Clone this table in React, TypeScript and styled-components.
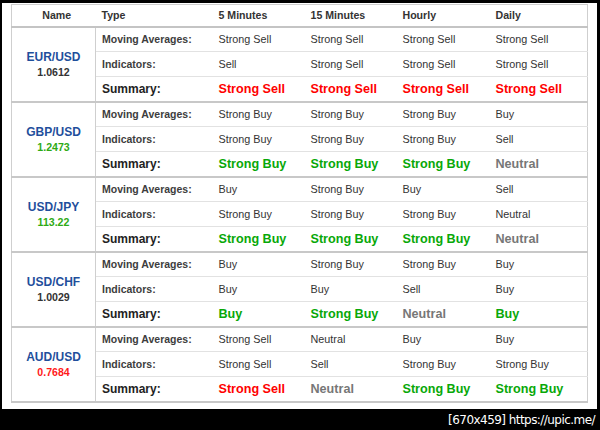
import React from "react";
import styled, { createGlobalStyle } from "styled-components";

const Global = createGlobalStyle`
  html, body { margin: 0; padding: 0; background: #000; }
  body { font-family: "Liberation Sans", Arial, sans-serif; }
`;

type Signal = "Strong Sell" | "Sell" | "Neutral" | "Buy" | "Strong Buy";
type Trend = "up" | "down" | "flat";

interface Pair {
  name: string;
  price: string;
  trend: Trend;
  ma: Signal[];
  ind: Signal[];
  sum: Signal[];
}

const pairs: Pair[] = [
  {
    name: "EUR/USD",
    price: "1.0612",
    trend: "flat",
    ma: ["Strong Sell", "Strong Sell", "Strong Sell", "Strong Sell"],
    ind: ["Sell", "Strong Sell", "Strong Sell", "Strong Sell"],
    sum: ["Strong Sell", "Strong Sell", "Strong Sell", "Strong Sell"],
  },
  {
    name: "GBP/USD",
    price: "1.2473",
    trend: "up",
    ma: ["Strong Buy", "Strong Buy", "Strong Buy", "Buy"],
    ind: ["Strong Buy", "Strong Buy", "Strong Buy", "Sell"],
    sum: ["Strong Buy", "Strong Buy", "Strong Buy", "Neutral"],
  },
  {
    name: "USD/JPY",
    price: "113.22",
    trend: "up",
    ma: ["Buy", "Strong Buy", "Buy", "Sell"],
    ind: ["Strong Buy", "Strong Buy", "Strong Buy", "Neutral"],
    sum: ["Strong Buy", "Strong Buy", "Strong Buy", "Neutral"],
  },
  {
    name: "USD/CHF",
    price: "1.0029",
    trend: "flat",
    ma: ["Buy", "Strong Buy", "Strong Buy", "Buy"],
    ind: ["Buy", "Buy", "Sell", "Buy"],
    sum: ["Buy", "Strong Buy", "Neutral", "Buy"],
  },
  {
    name: "AUD/USD",
    price: "0.7684",
    trend: "down",
    ma: ["Strong Sell", "Neutral", "Buy", "Buy"],
    ind: ["Strong Sell", "Sell", "Strong Buy", "Strong Buy"],
    sum: ["Strong Sell", "Neutral", "Strong Buy", "Strong Buy"],
  },
];

const Page = styled.div`
  width: 600px;
  height: 430px;
  display: flex;
  flex-direction: column;
  background: #000;
  overflow: hidden;
`;

const Panel = styled.div`
  margin: 3px 3px 0 2px;
  height: 406px;
  background: #fff;
  padding: 1px 10px 0 9px;
  box-sizing: border-box;
`;

const Footer = styled.div`
  flex: 1;
  display: flex;
  align-items: center;
  justify-content: flex-end;
  padding-right: 5px;
  color: #fff;
  font-family: "DejaVu Sans", sans-serif;
  font-size: 12px;
  letter-spacing: -0.55px;
`;

const Table = styled.table`
  width: 576px;
  border-collapse: collapse;
  table-layout: fixed;
  border: 1px solid #cfcfcf;
`;

const HeadRow = styled.tr`
  height: 22px;
`;

const HeadCell = styled.th<{ $center?: boolean }>`
  padding: 0 0 0 6px;
  text-align: ${(p) => (p.$center ? "center" : "left")};
  font-size: 10.6px;
  font-weight: bold;
  color: #333;
  border-bottom: 2px solid #c4c4c4;
`;

const NameCell = styled.td`
  text-align: center;
  vertical-align: middle;
  border-right: 1px solid #cfcfcf;
  border-bottom: 2px solid #c8c8c8;
  padding: 0;
`;

const PairName = styled.div`
  font-size: 12px;
  font-weight: bold;
  color: #1f4f9c;
  line-height: 15px;
`;

const priceColor: Record<Trend, string> = {
  up: "#2eaa14",
  down: "#ff1a1a",
  flat: "#333",
};

const Price = styled.div<{ $trend: Trend }>`
  font-size: 10.6px;
  font-weight: bold;
  color: ${(p) => priceColor[p.$trend]};
  line-height: 14px;
`;

const Row = styled.tr<{ $last?: boolean }>`
  height: 25px;
  border-bottom: ${(p) => (p.$last ? "2px solid #c8c8c8" : "1px solid #e2e2e2")};
`;

const Label = styled.td<{ $summary?: boolean }>`
  padding: 0 0 0 6px;
  font-size: ${(p) => (p.$summary ? "12px" : "10.5px")};
  font-weight: bold;
  color: ${(p) => (p.$summary ? "#222" : "#3d3d3d")};
  white-space: nowrap;
`;

const Value = styled.td`
  padding: 0 0 0 6px;
  font-size: 10.8px;
  color: #333;
  white-space: nowrap;
`;

const sumColor: Record<Signal, string> = {
  "Strong Sell": "#ff0000",
  Sell: "#ff0000",
  Neutral: "#777",
  Buy: "#08a808",
  "Strong Buy": "#08a808",
};

const SumValue = styled.td<{ $signal: Signal }>`
  padding: 0 0 0 6px;
  font-size: 12.6px;
  font-weight: bold;
  color: ${(p) => sumColor[p.$signal]};
  white-space: nowrap;
`;

const widths = [84, 117, 92, 92, 93, 98];

export default function App() {
  return (
    <Page>
      <Global />
      <Panel>
        <Table>
          <colgroup>
            {widths.map((w, i) => (
              <col key={i} style={{ width: w }} />
            ))}
          </colgroup>
          <thead>
            <HeadRow>
              <HeadCell $center>Name</HeadCell>
              <HeadCell>Type</HeadCell>
              <HeadCell>5 Minutes</HeadCell>
              <HeadCell>15 Minutes</HeadCell>
              <HeadCell>Hourly</HeadCell>
              <HeadCell>Daily</HeadCell>
            </HeadRow>
          </thead>
          <tbody>
            {pairs.map((p) => (
              <React.Fragment key={p.name}>
                <Row>
                  <NameCell rowSpan={3}>
                    <PairName>{p.name}</PairName>
                    <Price $trend={p.trend}>{p.price}</Price>
                  </NameCell>
                  <Label>Moving Averages:</Label>
                  {p.ma.map((s, i) => (
                    <Value key={i}>{s}</Value>
                  ))}
                </Row>
                <Row>
                  <Label>Indicators:</Label>
                  {p.ind.map((s, i) => (
                    <Value key={i}>{s}</Value>
                  ))}
                </Row>
                <Row $last>
                  <Label $summary>Summary:</Label>
                  {p.sum.map((s, i) => (
                    <SumValue key={i} $signal={s}>
                      {s}
                    </SumValue>
                  ))}
                </Row>
              </React.Fragment>
            ))}
          </tbody>
        </Table>
      </Panel>
      <Footer>[670x459] https://upic.me/</Footer>
    </Page>
  );
}
